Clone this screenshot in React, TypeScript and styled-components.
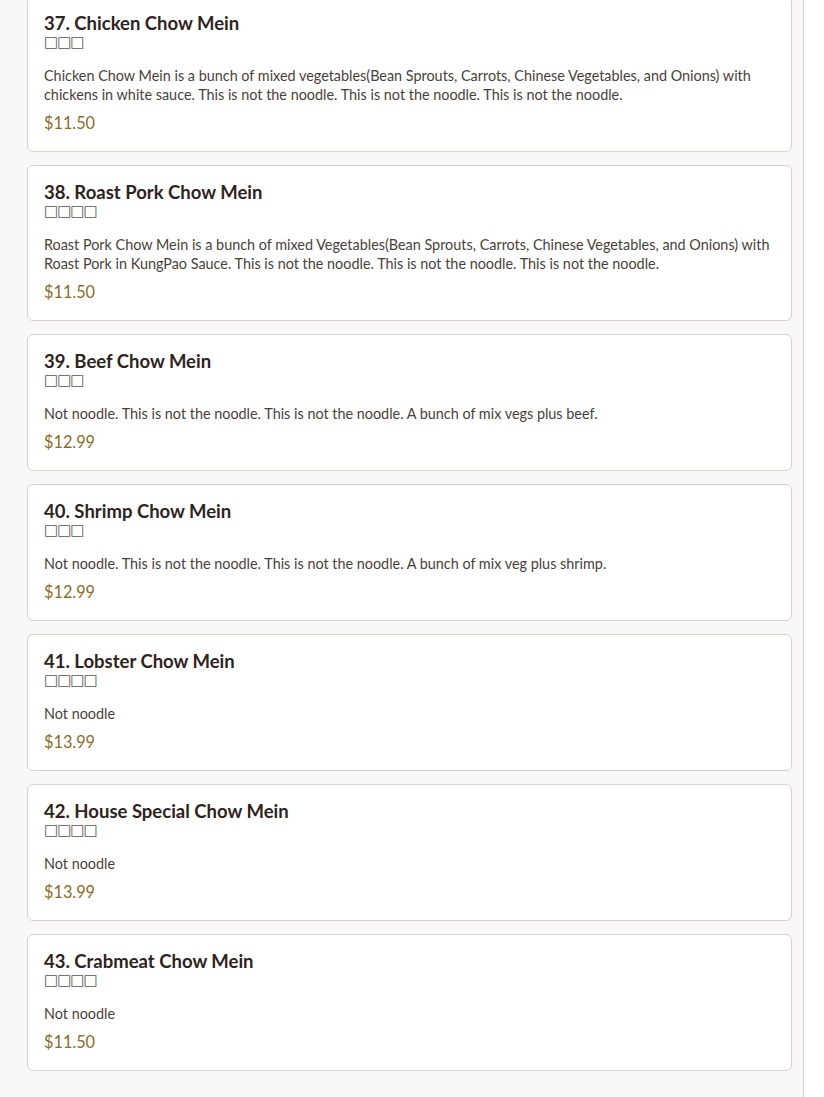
import React from 'react';
import styled, { createGlobalStyle } from 'styled-components';

interface MenuItem {
    no: number;
    name: string;
    chinese: string;
    description: string;
    price: number;
}

const items: MenuItem[] = [
    {
        no: 37,
        name: 'Chicken Chow Mein',
        chinese: '□□□',
        description:
            'Chicken Chow Mein is a bunch of mixed vegetables(Bean Sprouts, Carrots, Chinese Vegetables, and Onions) with chickens in white sauce. This is not the noodle. This is not the noodle. This is not the noodle.',
        price: 11.5,
    },
    {
        no: 38,
        name: 'Roast Pork Chow Mein',
        chinese: '□□□□',
        description:
            'Roast Pork Chow Mein is a bunch of mixed Vegetables(Bean Sprouts, Carrots, Chinese Vegetables, and Onions) with Roast Pork in KungPao Sauce. This is not the noodle. This is not the noodle. This is not the noodle.',
        price: 11.5,
    },
    {
        no: 39,
        name: 'Beef Chow Mein',
        chinese: '□□□',
        description:
            'Not noodle. This is not the noodle. This is not the noodle. A bunch of mix vegs plus beef.',
        price: 12.99,
    },
    {
        no: 40,
        name: 'Shrimp Chow Mein',
        chinese: '□□□',
        description:
            'Not noodle. This is not the noodle. This is not the noodle. A bunch of mix veg plus shrimp.',
        price: 12.99,
    },
    {
        no: 41,
        name: 'Lobster Chow Mein',
        chinese: '□□□□',
        description: 'Not noodle',
        price: 13.99,
    },
    {
        no: 42,
        name: 'House Special Chow Mein',
        chinese: '□□□□',
        description: 'Not noodle',
        price: 13.99,
    },
    {
        no: 43,
        name: 'Crabmeat Chow Mein',
        chinese: '□□□□',
        description: 'Not noodle',
        price: 11.5,
    },
];

export default function App() {
    return (
        <>
            <GlobalStyle />
            <Page>
                <MenuColumn>
                    <ItemList>
                        {items.map((item) => (
                            <ItemCard key={item.no}>
                                <ItemTitle>
                                    {item.no}. {item.name}
                                </ItemTitle>
                                <ChineseName>{item.chinese}</ChineseName>
                                <Description>{item.description}</Description>
                                <Price>${item.price.toFixed(2)}</Price>
                            </ItemCard>
                        ))}
                    </ItemList>
                </MenuColumn>
            </Page>
        </>
    );
}

const GlobalStyle = createGlobalStyle`
    html, body {
        margin: 0;
        padding: 0;
        background: #ffffff;
    }
    body {
        font-family: Lato, "Noto Sans", sans-serif;
        overflow: hidden;
    }
`;

const Page = styled.div`
    display: flex;
    height: 1097px;
    overflow: hidden;
`;

const MenuColumn = styled.div`
    width: 804px;
    flex-shrink: 0;
    background: #f9f8f6;
    border-right: 1px solid #d4d2cf;
    padding: 0 11px 0 27px;
    box-sizing: border-box;
`;

const ItemList = styled.div`
    display: flex;
    flex-direction: column;
    gap: 13px;
    margin-top: -4px;
`;

const ItemCard = styled.div`
    background: #ffffff;
    border: 1px solid #d6d3cf;
    border-radius: 6px;
    padding: 15px 16px 17px;
    display: flex;
    flex-direction: column;
`;

const ItemTitle = styled.div`
    font-size: 18.5px;
    font-weight: 700;
    line-height: 22px;
    color: #2e2320;
`;

const ChineseName = styled.div`
    font-family: "DejaVu Sans", sans-serif;
    font-size: 15px;
    line-height: 16px;
    color: #5a5552;
    letter-spacing: -1px;
`;

const Description = styled.p`
    margin: 16px 0 0;
    font-size: 14.4px;
    line-height: 19px;
    color: #4b3f3a;
`;

const Price = styled.div`
    margin-top: 8px;
    font-size: 16.3px;
    line-height: 22px;
    color: #8a6c2c;
`;
